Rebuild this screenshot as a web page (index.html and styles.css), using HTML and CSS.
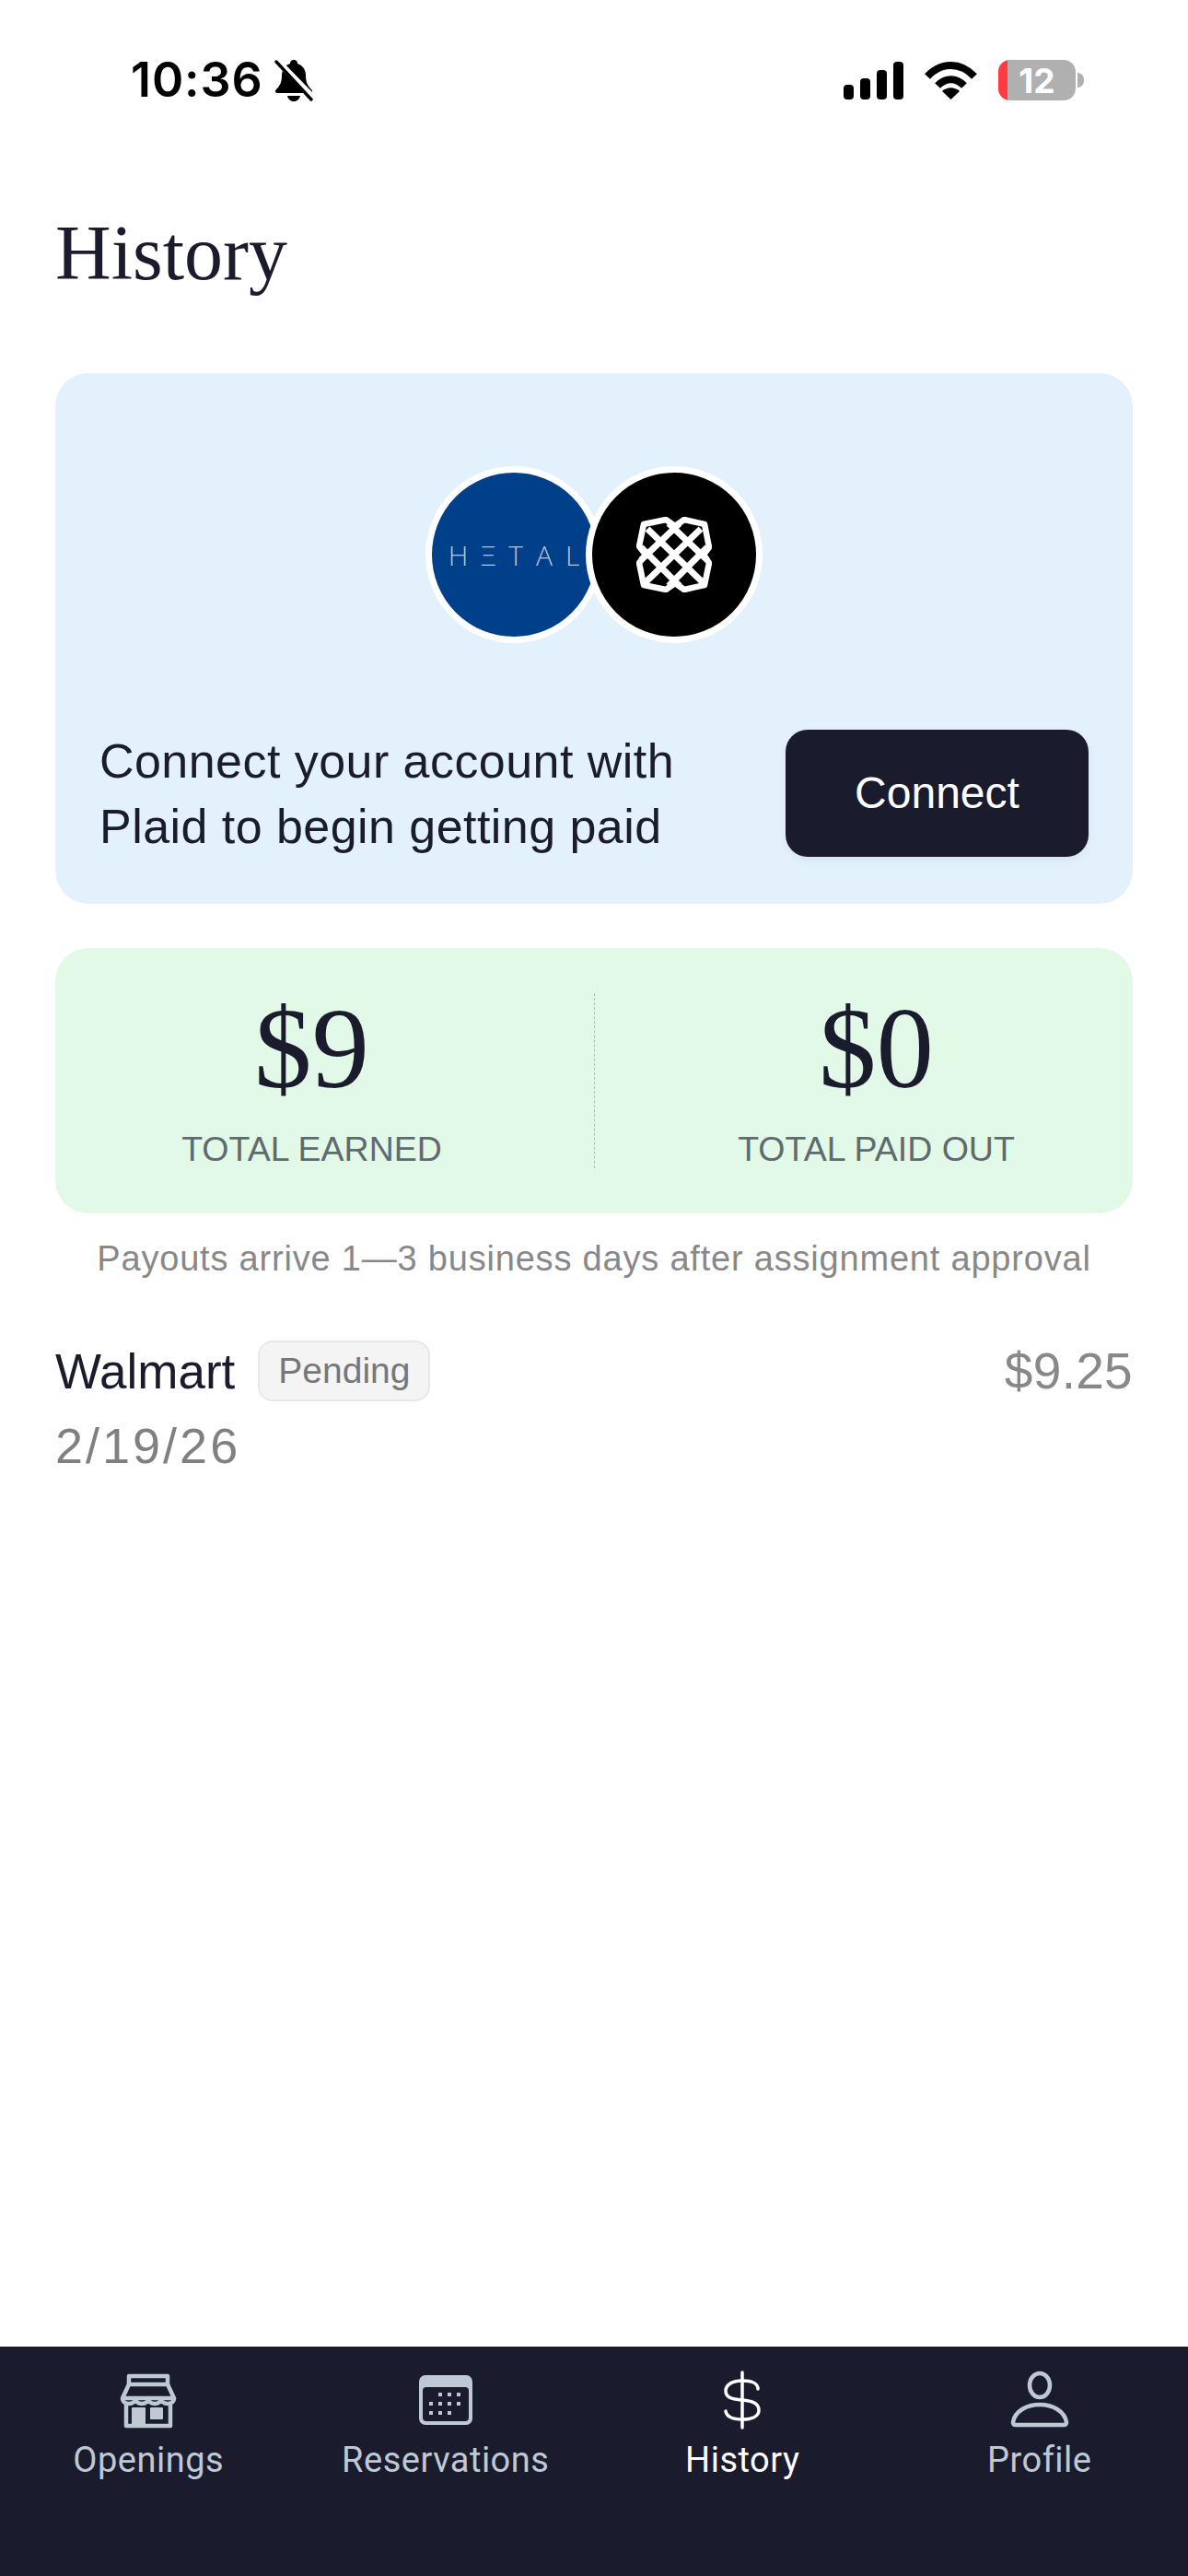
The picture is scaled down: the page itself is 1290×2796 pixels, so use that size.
FILE: index.html
```html
<!DOCTYPE html>
<html>

<head>
    <title>History</title>
    <link rel="stylesheet" href="styles.css">
</head>

<body>
    <div class="screen">
        <div class="status-bar">
            <div class="status-left">
                <span class="clock">10:36</span>
                <svg class="bell" viewBox="0 0 42 45">
                    <path fill="#000" d="M21 0c3 0 4 2 4 4 6 2 9 7 9 13 0 7 2 11 6 15 2 2 1 4-2 4H4c-3 0-4-2-2-4 4-4 6-8 6-15 0-6 3-11 9-13 0-2 1-4 4-4z" />
                    <path fill="#000" d="M14 39h14c-1 4-4 6-7 6s-6-2-7-6z" />
                    <path stroke="#fff" stroke-width="7" d="M2 0l42 43" />
                    <path stroke="#000" stroke-width="3.4" stroke-linecap="round" d="M2 2l38 41" />
                </svg>
            </div>
            <div class="status-right">
                <svg class="signal" viewBox="0 0 65 41">
                    <rect x="0" y="25" width="11" height="16" rx="4" />
                    <rect x="18" y="18" width="11" height="23" rx="4" />
                    <rect x="36" y="9" width="11" height="32" rx="4" />
                    <rect x="54" y="0" width="11" height="41" rx="4" />
                </svg>
                <svg class="wifi" viewBox="0 0 57 42">
                    <path fill="none" stroke="#000" stroke-width="8" d="M3 17C18 1 39 1 54 17" />
                    <path fill="none" stroke="#000" stroke-width="8" d="M14 27c9-9 20-9 29 0" />
                    <path d="M19 33c6-5 13-5 19 0l-9.500 9z" />
                </svg>
                <div class="battery">
                    <div class="battery-body">
                        <div class="battery-low"></div>
                        <span class="battery-num">12</span>
                    </div>
                    <div class="battery-cap"></div>
                </div>
            </div>
        </div>

        <div class="content">
            <h1>History</h1>

            <div class="card connect-card">
                <div class="logos">
                    <div class="logo logo-hetal"><span>HΞTAL</span></div>
                    <div class="logo logo-plaid">
                        <svg viewBox="0 0 82 82">
                            <path fill="none" stroke="#fff" stroke-width="6.500" stroke-linejoin="round" d="M8 8L32 3 42 10 52 3 74 8 79 33 73 41 79 50 74 74 52 79 42 72 32 79 8 74 3 50 10 41 3 32z" />
                            <path fill="none" stroke="#fff" stroke-width="7" d="M12 13L73 72M35 7L77 47M5 33L47 75M70 13L9 72M47 7L5 47M77 33L35 75" />
                        </svg>
                    </div>
                </div>
                <div class="connect-row">
                    <p class="connect-text">Connect your account with<br>Plaid to begin getting paid</p>
                    <button class="connect-btn">Connect</button>
                </div>
            </div>

            <div class="card totals-card">
                <div class="total">
                    <div class="total-value">$9</div>
                    <div class="total-label">TOTAL EARNED</div>
                </div>
                <div class="total-divider"></div>
                <div class="total">
                    <div class="total-value">$0</div>
                    <div class="total-label">TOTAL PAID OUT</div>
                </div>
            </div>

            <p class="payout-note">Payouts arrive 1—3 business days after assignment approval</p>

            <div class="history-row">
                <div class="history-top">
                    <div class="history-name">
                        <span class="store">Walmart</span>
                        <span class="badge">Pending</span>
                    </div>
                    <span class="amount">$9.25</span>
                </div>
                <div class="history-date">2/19/26</div>
            </div>
        </div>

        <nav class="tab-bar">
            <div class="tab">
                <svg class="tab-icon" viewBox="0 0 64 64">
                    <g fill="none" stroke="#bfc9d4" stroke-width="4.500" stroke-linejoin="round">
                        <path d="M11 6h42v9H11z" />
                        <path d="M11 15L4 30h56l-7-15" />
                        <path d="M4 30c0 8 14 8 14 0 0 8 14 8 14 0 0 8 14 8 14 0 0 8 14 8 14 0" />
                        <path d="M8 36v24h48V36" />
                    </g>
                    <rect fill="#bfc9d4" x="14" y="40" width="15" height="21" rx="1" />
                    <rect fill="#bfc9d4" x="34" y="40" width="14" height="13" rx="1" />
                </svg>
                <span>Openings</span>
            </div>
            <div class="tab">
                <svg class="tab-icon" viewBox="0 0 64 64">
                    <rect fill="#bfc9d4" x="3" y="5" width="58" height="54" rx="7" />
                    <rect fill="#1a1c2e" x="7" y="18" width="50" height="37" rx="4" />
                    <g fill="#bfc9d4">
                        <rect x="24" y="24" width="4" height="4" />
                        <rect x="34" y="24" width="4" height="4" />
                        <rect x="44" y="24" width="4" height="4" />
                        <rect x="14" y="34" width="4" height="4" />
                        <rect x="24" y="34" width="4" height="4" />
                        <rect x="34" y="34" width="4" height="4" />
                        <rect x="44" y="34" width="4" height="4" />
                        <rect x="14" y="44" width="4" height="4" />
                        <rect x="24" y="44" width="4" height="4" />
                        <rect x="34" y="44" width="4" height="4" />
                    </g>
                </svg>
                <span>Reservations</span>
            </div>
            <div class="tab tab-active">
                <svg class="tab-icon" viewBox="0 0 64 64">
                    <g fill="none" stroke="#fff" stroke-width="3.500" stroke-linecap="round">
                        <path d="M32 2v60" />
                        <path d="M49 20c0-6-7-9-17-9s-18 4-18 11c0 8 8 9 18 10s18 3 18 11c0 7-8 10-18 10s-17-3-18-9" />
                    </g>
                </svg>
                <span>History</span>
            </div>
            <div class="tab">
                <svg class="tab-icon" viewBox="0 0 64 64">
                    <g fill="none" stroke="#bfc9d4" stroke-width="4.500" stroke-linejoin="round">
                        <ellipse cx="32" cy="16" rx="11" ry="13" />
                        <path d="M6 59c-2 0-3-1-3-3 2-12 15-19 29-19s27 7 29 19c0 2-1 3-3 3z" />
                    </g>
                </svg>
                <span>Profile</span>
            </div>
        </nav>
    </div>
</body>

</html>
```

FILE: styles.css
```css
* {
    box-sizing: border-box;
}

body {
    font-family: "Liberation Sans", Arial, sans-serif;
    background-color: #fff;
    color: #1a1c2e;
    margin: 0;
    padding: 0;
}

.screen {
    width: 1290px;
    height: 2796px;
    display: flex;
    flex-direction: column;
    overflow: hidden;
}

/* status bar */
.status-bar {
    display: flex;
    justify-content: space-between;
    align-items: center;
    height: 88px;
    margin-top: 43px;
    padding: 0 113px 0 142px;
    color: #000;
}

.status-left {
    display: flex;
    align-items: center;
    gap: 12px;
}

.clock {
    font-family: Inter, sans-serif;
    font-size: 52px;
    font-weight: 600;
    letter-spacing: 0.9px;
    line-height: 1;
}

.bell {
    width: 42px;
    height: 45px;
}

.status-right {
    display: flex;
    align-items: center;
}

.signal {
    width: 65px;
    height: 41px;
    margin-right: 23px;
}

.wifi {
    width: 57px;
    height: 42px;
    margin-right: 23px;
}

.battery {
    display: flex;
    align-items: center;
    gap: 2px;
}

.battery-body {
    position: relative;
    width: 84px;
    height: 44px;
    border-radius: 13px;
    background-color: #b0b0b0;
    overflow: hidden;
    display: flex;
    align-items: center;
    justify-content: center;
}

.battery-low {
    position: absolute;
    left: 0;
    top: 0;
    bottom: 0;
    width: 10px;
    background-color: #ff3b3f;
}

.battery-num {
    font-family: Inter, sans-serif;
    font-size: 37px;
    font-weight: 700;
    color: #fff;
    line-height: 1;
}

.battery-cap {
    width: 7px;
    height: 16px;
    border-radius: 0 8px 8px 0;
    background-color: #b0b0b0;
}

/* main */
.content {
    flex: 1;
    padding: 0 60px;
}

h1 {
    font-family: "Liberation Serif", serif;
    font-size: 84px;
    font-weight: 400;
    line-height: 96px;
    margin: 0;
    padding-top: 96px;
    height: 274px;
}

.card {
    border-radius: 36px;
}

.connect-card {
    height: 576px;
    background-color: #e2f1fb;
    padding: 101px 48px 0;
}

.logos {
    display: flex;
    justify-content: center;
}

.logo {
    width: 192px;
    height: 192px;
    border-radius: 50%;
    border: 7px solid #fff;
    display: flex;
    align-items: center;
    justify-content: center;
}

.logo-hetal {
    background-color: #00408a;
    color: #b4c5dd;
    font-family: "Open Sans", sans-serif;
    font-weight: 300;
    font-size: 30px;
    letter-spacing: 14px;
    padding-left: 14px;
    white-space: nowrap;
    overflow: hidden;
}

.logo-plaid {
    background-color: #000;
    margin-left: -18px;
}

.logo-plaid svg {
    width: 82px;
    height: 82px;
}

.connect-row {
    display: flex;
    justify-content: space-between;
    align-items: center;
    margin-top: 90px;
}

.connect-text {
    margin: 0;
    padding-top: 3px;
    font-size: 52px;
    line-height: 71px;
    letter-spacing: 0.45px;
}

.connect-btn {
    width: 329px;
    height: 138px;
    background-color: #1a1c2e;
    color: #fff;
    border: none;
    border-radius: 24px;
    font-family: "Liberation Sans", Arial, sans-serif;
    font-size: 48px;
    box-shadow: 0 4px 10px rgba(0, 0, 0, 0.05);
}

.totals-card {
    height: 288px;
    margin-top: 48px;
    background-color: #e3f9e7;
    display: flex;
    align-items: center;
    justify-content: center;
}

.total {
    width: 400px;
    text-align: center;
}

.total-value {
    font-family: "Liberation Serif", serif;
    font-size: 125px;
    line-height: 124px;
}

.total-label {
    font-size: 37.5px;
    line-height: 46px;
    color: #5f6b6f;
    margin-top: 24px;
}

.total-divider {
    width: 0;
    height: 190px;
    margin: 0 106px;
    border-left: 1px dashed #aebdb2;
}

.payout-note {
    margin: 25px 0 0;
    text-align: center;
    font-size: 38px;
    line-height: 48px;
    letter-spacing: 0.8px;
    color: #888;
}

.history-row {
    margin-top: 65px;
}

.history-top {
    display: flex;
    justify-content: space-between;
    align-items: center;
}

.history-name {
    display: flex;
    align-items: center;
    gap: 25px;
}

.store {
    font-size: 53px;
}

.badge {
    display: flex;
    align-items: center;
    height: 66px;
    padding: 0 20px;
    font-size: 39px;
    color: #777;
    background-color: #f4f4f4;
    border: 2px solid #e8e8e8;
    border-radius: 16px;
}

.amount {
    font-size: 55px;
    letter-spacing: 0.3px;
    color: #888;
}

.history-date {
    margin-top: 18px;
    font-size: 54px;
    line-height: 60px;
    letter-spacing: 3px;
    color: #808080;
}

/* tab bar */
.tab-bar {
    display: grid;
    grid-template-columns: repeat(4, 1fr);
    height: 249px;
    padding-top: 26px;
    background-color: #1a1c2e;
}

.tab {
    display: flex;
    flex-direction: column;
    align-items: center;
    font-family: Roboto, sans-serif;
    font-size: 38px;
    line-height: 46px;
    color: #bfc9d4;
    letter-spacing: 0.5px;
}

.tab-active {
    color: #fff;
}

.tab-icon {
    width: 64px;
    height: 64px;
    margin-bottom: 10px;
}
```
